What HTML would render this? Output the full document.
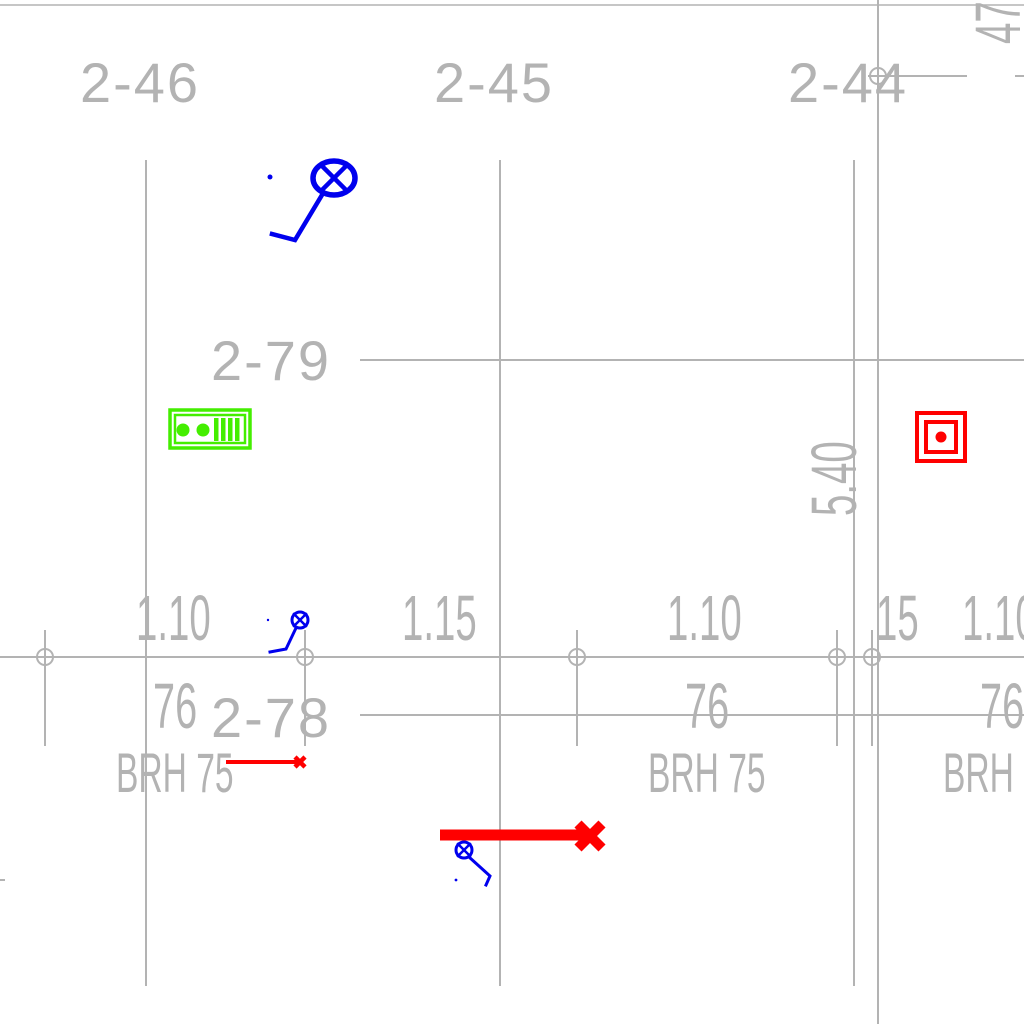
<!DOCTYPE html>
<html><head><style>html,body{margin:0;padding:0;background:#fff;}svg{display:block}</style></head><body>
<svg width="1024" height="1024" viewBox="0 0 1024 1024" xmlns="http://www.w3.org/2000/svg">
<g stroke="#b3b3b3" stroke-width="2" fill="none">
<line x1="0" y1="5" x2="1024" y2="5" stroke-width="1.5"/>
<line x1="146" y1="160" x2="146" y2="986"/>
<line x1="500" y1="160" x2="500" y2="986"/>
<line x1="854" y1="160" x2="854" y2="986"/>
<line x1="878" y1="0" x2="878" y2="1024"/>
<line x1="360" y1="360" x2="1024" y2="360"/>
<line x1="360" y1="715" x2="1024" y2="715"/>
<line x1="0" y1="657" x2="1024" y2="657"/>
<line x1="868" y1="76" x2="967" y2="76"/>
<line x1="1015" y1="76" x2="1024" y2="76"/>
<line x1="0" y1="880" x2="5" y2="880"/>
<line x1="45" y1="630" x2="45" y2="746"/>
<line x1="305" y1="630" x2="305" y2="746"/>
<line x1="577" y1="630" x2="577" y2="746"/>
<line x1="837" y1="630" x2="837" y2="746"/>
<line x1="872" y1="630" x2="872" y2="746"/>
<circle cx="45" cy="657" r="8"/>
<circle cx="305" cy="657" r="8"/>
<circle cx="577" cy="657" r="8"/>
<circle cx="837" cy="657" r="8"/>
<circle cx="872" cy="657" r="8"/>
<circle cx="878" cy="76" r="8"/>
</g>
<g fill="#b3b3b3" font-family="Liberation Sans, sans-serif">
<text x="140" y="102" font-size="56" text-anchor="middle" letter-spacing="2">2-46</text>
<text x="494" y="102" font-size="56" text-anchor="middle" letter-spacing="2">2-45</text>
<text x="848" y="102" font-size="56" text-anchor="middle" letter-spacing="2">2-44</text>
<text x="271" y="380" font-size="56" text-anchor="middle" letter-spacing="2">2-79</text>
<text x="271" y="737" font-size="56" text-anchor="middle" letter-spacing="2">2-78</text>
<g font-size="64">
<text transform="translate(136,640) scale(0.6,1)">1.10</text>
<text transform="translate(402,640) scale(0.6,1)">1.15</text>
<text transform="translate(667,640) scale(0.6,1)">1.10</text>
<text transform="translate(876,640) scale(0.6,1)">15</text>
<text transform="translate(962,640) scale(0.6,1)">1.10</text>
<text transform="translate(153,728) scale(0.62,1)">76</text>
<text transform="translate(685,728) scale(0.62,1)">76</text>
<text transform="translate(980,728) scale(0.62,1)">76</text>
<text transform="translate(856,516) rotate(-90) scale(0.6,1)">5.40</text>
<text transform="translate(1020,44) rotate(-90) scale(0.6,1)">47</text>
</g>
<g font-size="56">
<text transform="translate(116,792) scale(0.6,1)">BRH 75</text>
<text transform="translate(648,792) scale(0.6,1)">BRH 75</text>
<text transform="translate(943,792) scale(0.6,1)">BRH</text>
</g>
</g>
<g stroke="#0000ee" fill="none" stroke-linecap="square">
<ellipse cx="334" cy="178" rx="21" ry="17" stroke-width="5.5"/>
<line x1="322" y1="166" x2="346" y2="190" stroke-width="4.5"/>
<line x1="346" y1="166" x2="322" y2="190" stroke-width="4.5"/>
<polyline points="322,195 295,240 272,234" stroke-width="4.5"/>
<circle cx="300" cy="620" r="8" stroke-width="3"/>
<line x1="294" y1="614" x2="306" y2="626" stroke-width="2.5"/>
<line x1="306" y1="614" x2="294" y2="626" stroke-width="2.5"/>
<polyline points="296,628 286,649 270,652" stroke-width="3"/>
<circle cx="464" cy="850" r="8" stroke-width="3"/>
<line x1="458" y1="844" x2="470" y2="856" stroke-width="2.5"/>
<line x1="470" y1="844" x2="458" y2="856" stroke-width="2.5"/>
<polyline points="469,857 490,876 486,885" stroke-width="3"/>
</g>
<g fill="#0000ee"><circle cx="270" cy="177" r="2.5"/><circle cx="268" cy="620" r="1.2"/><circle cx="456" cy="880" r="1.4"/></g>
<g stroke="#ff0000" fill="none">
<line x1="440" y1="835" x2="585" y2="835" stroke-width="11"/>
<line x1="578" y1="824" x2="602" y2="848" stroke-width="10"/>
<line x1="602" y1="824" x2="578" y2="848" stroke-width="10"/>
<line x1="226" y1="762" x2="300" y2="762" stroke-width="4"/>
<line x1="295" y1="757" x2="305" y2="767" stroke-width="4.5"/>
<line x1="305" y1="757" x2="295" y2="767" stroke-width="4.5"/>
<rect x="917" y="413" width="48" height="48" stroke-width="4"/>
<rect x="926" y="422" width="30" height="30" stroke-width="4"/>
</g>
<circle cx="941" cy="437" r="5.5" fill="#ff0000"/>
<g stroke="#44ee00" fill="none">
<rect x="170" y="410" width="80" height="38" stroke-width="3.5"/>
<rect x="175" y="415" width="70" height="28" stroke-width="2.5"/>
</g>
<g fill="#44ee00">
<circle cx="183" cy="430" r="6.5"/><circle cx="203" cy="430" r="6.5"/>
<rect x="214" y="418" width="4.5" height="23"/><rect x="221" y="418" width="4.5" height="23"/>
<rect x="228" y="418" width="4.5" height="23"/><rect x="235" y="418" width="4.5" height="23"/>
</g>
</svg>
</body></html>
